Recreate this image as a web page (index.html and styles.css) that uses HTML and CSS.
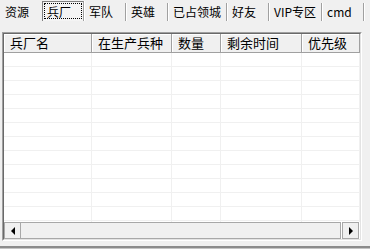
FILE: index.html
```html
<!DOCTYPE html>
<html>
<head>
<meta charset="utf-8">
<link rel="stylesheet" href="styles.css">
</head>
<body>
<div class="tabs">
  <div class="tab plain">资源</div>
  <div class="tab active"><span class="focus">兵厂</span></div>
  <div class="tab">军队</div>
  <div class="tab">英雄</div>
  <div class="tab">已占领城</div>
  <div class="tab">好友</div>
  <div class="tab">VIP专区</div>
  <div class="tab">cmd</div>
</div>
<div class="list">
  <div class="frame">
    <div class="header">
      <div class="hcell">兵厂名</div>
      <div class="hcell">在生产兵种</div>
      <div class="hcell">数量</div>
      <div class="hcell">剩余时间</div>
      <div class="hcell">优先级</div>
    </div>
    <div class="rows">
      <div class="row"><i></i><i></i><i></i><i></i><i></i></div>
      <div class="row"><i></i><i></i><i></i><i></i><i></i></div>
      <div class="row"><i></i><i></i><i></i><i></i><i></i></div>
      <div class="row"><i></i><i></i><i></i><i></i><i></i></div>
      <div class="row"><i></i><i></i><i></i><i></i><i></i></div>
      <div class="row"><i></i><i></i><i></i><i></i><i></i></div>
      <div class="row"><i></i><i></i><i></i><i></i><i></i></div>
      <div class="row"><i></i><i></i><i></i><i></i><i></i></div>
      <div class="row"><i></i><i></i><i></i><i></i><i></i></div>
      <div class="row"><i></i><i></i><i></i><i></i><i></i></div>
      <div class="row"><i></i><i></i><i></i><i></i><i></i></div>
      <div class="row"><i></i><i></i><i></i><i></i><i></i></div>
      <div class="row"><i></i><i></i><i></i><i></i><i></i></div>
    </div>
    <div class="hscroll">
      <div class="sbtn left"><span class="arrow-left"></span></div>
      <div class="thumb"></div>
      <div class="sbtn right"><span class="arrow-right"></span></div>
    </div>
  </div>
</div>
<div class="footer"></div>
</body>
</html>
```
FILE: styles.css
```css
* { box-sizing: border-box; }
html, body { margin: 0; padding: 0; }
body {
  width: 370px;
  height: 249px;
  overflow: hidden;
  background: #f0f0f0;
  font-family: "Noto Sans CJK SC", "Liberation Sans", sans-serif;
  font-size: 12px;
  color: #000;
}
.tabs {
  display: flex;
  height: 21px;
  padding-top: 3px;
}
.tab {
  min-width: 42px;
  height: 18px;
  padding: 0 5px;
  line-height: 18px;
  font-size: 12px;
  white-space: nowrap;
  border-right: 1px solid #a0a0a0;
  box-shadow: 1px 0 0 #ffffff;
}
.tab.plain {
  border-right-color: transparent;
  box-shadow: none;
}
.tab.active {
  margin-top: -2px;
  height: 20px;
  padding: 1px;
  border-left: 1px solid #808080;
  border-top: 1px solid #808080;
  background: #f4f4f4;
}
.focus {
  display: block;
  height: 16px;
  padding: 0 2px;
  line-height: 15px;
  border: 1px dotted #000;
}
.list {
  margin: 11px 0 0 2px;
  width: 360px;
  height: 209px;
  border: 1px solid;
  border-color: #a0a0a0 #ffffff #ffffff #a0a0a0;
}
.frame {
  height: 100%;
  border: 1px solid;
  border-color: #696969 #e3e3e3 #e3e3e3 #696969;
  background: #ffffff;
  display: flex;
  flex-direction: column;
}
.header, .row {
  display: grid;
  grid-template-columns: 88px 80px 49px 81px 58px;
}
.header {
  height: 19px;
  flex: none;
}
.hcell {
  background: #f0f0f0;
  border-right: 1px solid #a0a0a0;
  border-bottom: 1px solid #a0a0a0;
  box-shadow: inset 1px 1px 0 #ffffff;
  padding-left: 6px;
  font-size: 13px;
  line-height: 18px;
  white-space: nowrap;
}
.rows {
  flex: 1;
  overflow: hidden;
}
.row {
  height: 14px;
}
.row i {
  border-right: 1px solid #f0f0f0;
  border-bottom: 1px solid #f0f0f0;
}
.hscroll {
  flex: none;
  height: 17px;
  display: flex;
  padding-right: 1px;
  background: #ffffff;
}
.sbtn {
  width: 17px;
  height: 17px;
  border: 1px solid #a8a8a8;
  background: #f0f0f0;
  display: flex;
  align-items: center;
  justify-content: center;
}
.sbtn.right { margin-left: 1px; }
.thumb {
  flex: 1;
  height: 17px;
  border: 1px solid #a8a8a8;
  border-left: none;
  background: #f0f0f0;
}
.arrow-left {
  width: 0; height: 0;
  border-top: 4px solid transparent;
  border-bottom: 4px solid transparent;
  border-right: 4px solid #000;
}
.arrow-right {
  width: 0; height: 0;
  border-top: 4px solid transparent;
  border-bottom: 4px solid transparent;
  border-left: 4px solid #000;
}
.footer {
  margin-top: 5px;
  height: 3px;
  border-top: 2px solid #8c8c8c;
  background: #c4c4c4;
}
```
